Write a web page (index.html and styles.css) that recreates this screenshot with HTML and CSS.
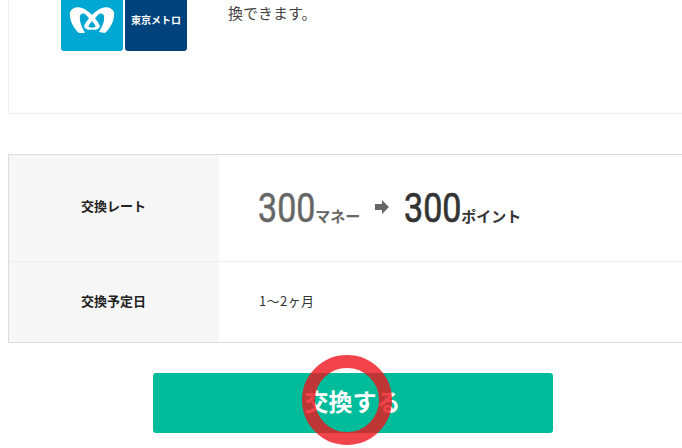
FILE: index.html
```html
<!DOCTYPE html>
<html lang="ja">
<head>
<meta charset="utf-8">
<title>交換する</title>
<link rel="stylesheet" href="styles.css">
</head>
<body>
<div class="page">
  <section class="card">
    <div class="logos">
      <div class="logo logo-mark">
        <svg viewBox="0 0 62 51" width="62" height="51" aria-hidden="true">
          <path fill="#fff" fill-rule="evenodd" d="M9 12C11 8 16 6 21 8C25 9.5 28 12 31 15C34 12 37 9.5 41 8C46 6 51 8 53 12C54 19 50 28 44 33L38 32C41 27 44 21 43 16C42 13 39 13 37 15C36 16 35 17 34 18.5C37 22 39.5 25 38.5 27.5C37 30 33 30 31 29.5C29 30 25 30 23.5 27.5C22.5 25 25 22 28 18.5C27 17 26 16 25 15C23 13 20 13 19 16C18 21 21 27 24 33L18 33C12 28 8 19 9 12ZM31 21C29 23.5 27.5 25.5 27.5 26.5C28 28 34 28 34.5 26.5C34.5 25.5 33 23.5 31 21Z"/>
        </svg>
      </div>
      <div class="logo logo-name"><span>東京メトロ</span></div>
    </div>
    <p class="card-text">換できます。</p>
  </section>

  <section class="info">
    <div class="row row-rate">
      <div class="label">交換レート</div>
      <div class="value rate">
        <span class="amount amount-from"><span class="num">300</span><small>マネー</small></span>
        <svg class="arrow" viewBox="0 0 16 14" width="16" height="14" aria-hidden="true">
          <path fill="#666" d="M1 4H8V0L15 7L8 14V10H1Z"/>
        </svg>
        <span class="amount amount-to"><span class="num">300</span><small>ポイント</small></span>
      </div>
    </div>
    <div class="row row-date">
      <div class="label">交換予定日</div>
      <div class="value date">1〜2ヶ月</div>
    </div>
  </section>

  <div class="actions">
    <button class="submit" type="button">交換する</button>
    <span class="ring"></span>
  </div>
</div>
</body>
</html>
```
FILE: styles.css
```css
* { box-sizing: border-box; }
html, body { margin: 0; padding: 0; background: #fff; }
body {
  width: 682px;
  height: 448px;
  overflow: hidden;
  font-family: "Noto Sans CJK JP", "Noto Sans", sans-serif;
  color: #333;
}
.page { width: 682px; padding-left: 8px; }

.card {
  width: 690px;
  height: 114px;
  border: 1px solid #eee;
  border-top: 0;
  display: flex;
  align-items: flex-start;
}
.logos { display: flex; gap: 2px; margin-left: 52px; }
.logo {
  width: 62px;
  height: 51px;
  border-radius: 0 0 3px 3px;
  display: flex;
  align-items: center;
  justify-content: center;
}
.logo-mark { background: #00a7d2; }
.logo-mark svg { display: block; }
.logo-name { background: #00437c; padding-bottom: 12px; }
.logo-name span {
  color: #fff;
  font-size: 10px;
  font-weight: 700;
  line-height: 1;
  white-space: nowrap;
}
.card-text {
  margin: 0 0 0 41px;
  font-size: 15px;
  line-height: 26px;
  color: #444;
}

.info {
  width: 690px;
  margin-top: 40px;
  border: 1px solid #ddd;
}
.row { display: flex; }
.row-rate { height: 107px; border-bottom: 1px solid #eee; }
.row-date { height: 80px; }
.label {
  width: 210px;
  flex: none;
  background: #f7f7f7;
  display: flex;
  align-items: center;
  justify-content: center;
  font-size: 13px;
  font-weight: 700;
  color: #222;
  padding: 0 1px 5px 0;
}
.row-date .label { padding-bottom: 3px; }
.value { padding-left: 40px; display: flex; align-items: center; }
.rate { gap: 14px; padding-left: 39px; padding-top: 1px; }
.amount {
  font-family: "Roboto", "Liberation Sans", sans-serif;
  font-size: 41px;
  line-height: 1;
  white-space: nowrap;
}
.num {
  display: inline-block;
  transform: scaleX(0.83);
  transform-origin: left center;
  margin-right: -12px;
}
.amount small {
  font-family: "Noto Sans CJK JP", sans-serif;
  font-size: 15px;
  font-weight: 700;
}
.amount-from { color: #666; font-weight: 400; }
.amount-from .num { -webkit-text-stroke: 0.5px #666; }
.amount-to { color: #333; font-weight: 400; }
.amount-to .num { -webkit-text-stroke: 0.7px #333; }
.arrow { margin-bottom: 4px; flex: none; }
.date { font-size: 13px; letter-spacing: 0.4px; color: #333; padding-bottom: 3px; }

.actions {
  position: relative;
  margin-top: 30px;
  display: flex;
  justify-content: center;
  width: 690px;
}
.submit {
  width: 400px;
  height: 60px;
  border: 0;
  border-radius: 3px;
  background: #00bc9b;
  color: #fff;
  font-family: "Noto Sans CJK JP", sans-serif;
  font-size: 24px;
  font-weight: 700;
  padding: 0 1px 6px 0;
}
.ring {
  position: absolute;
  left: 294px;
  top: -18px;
  width: 90px;
  height: 90px;
  border: 13px solid rgba(237, 20, 28, 0.8);
  border-radius: 50%;
}
```
